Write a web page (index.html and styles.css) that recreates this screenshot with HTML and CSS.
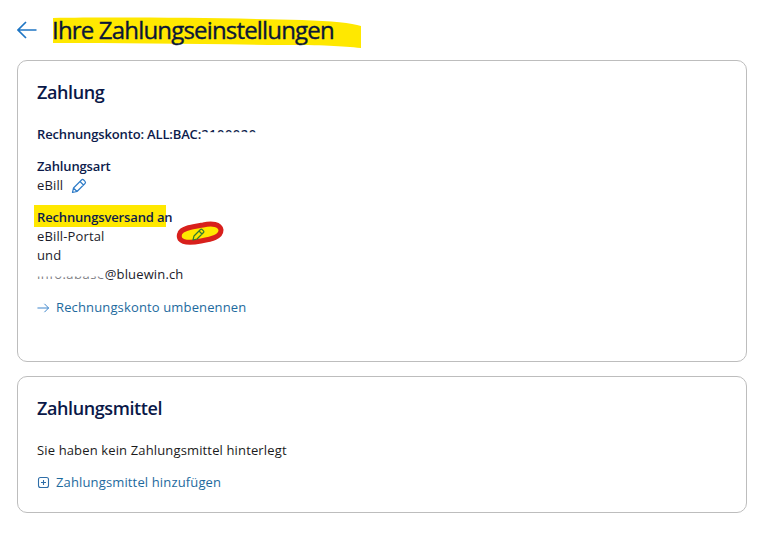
FILE: index.html
```html
<!DOCTYPE html>
<html lang="de">
<head>
<meta charset="utf-8">
<title>Ihre Zahlungseinstellungen</title>
<link rel="stylesheet" href="styles.css">
</head>
<body>
<main class="page">
  <header class="head">
    <svg class="back" viewBox="0 0 20 18" width="20" height="18"><path d="M19.500 9H1M9 1 1 9l8 8" fill="none" stroke="#1f76c4" stroke-width="1.700"/></svg>
    <h1 class="title">
      <svg class="mark-title" viewBox="0 0 310 38" width="310" height="38"><path d="M1 6C70 5 180 6 250 8 280 9 300 11 309 14L309 36C290 34 270 33 230 33 150 32 70 31 1 31Z" fill="#ffe800"/></svg>
      <span class="title-text">Ihre Zahlungseinstellungen</span>
    </h1>
  </header>
  <section class="card card-pay">
    <h2 class="card-title">Zahlung</h2>
    <p class="strong acct">Rechnungskonto: ALL:BAC:<span class="redact-acct">2100020</span></p>
    <div class="group">
      <div class="strong">Zahlungsart</div>
      <div class="row">eBill
        <svg class="pen" viewBox="0 0 16 16" width="16" height="16"><path d="M1.500 14.500l1-4.500L10.500 2a1.600 1.600 0 0 1 2.200 0l1.300 1.300a1.600 1.600 0 0 1 0 2.200L6 13.500zM9 3.500 12.500 7M2.500 10 6 13.500" fill="none" stroke="#2f7cc8" stroke-width="1.200" stroke-linejoin="round"/></svg>
      </div>
    </div>
    <div class="group group-send">
      <div class="strong send-label"><span class="mark-send"></span><span class="on-mark">Rechnungsversand an</span></div>
      <div>eBill-Portal</div>
      <div>und</div>
      <div><span class="redact-mail">info.abase</span>@bluewin.ch</div>
      <div class="scribble">
        <svg viewBox="0 0 50 28" width="50" height="28">
          <path d="M5 14C7 9 17 8 28 6 37 4 45 5 46 11 46 18 37 20 26 22 16 24 8 24 5 20 4 18 4 16 5 14Z" fill="#ffe800" stroke="#d8201c" stroke-width="5" stroke-linejoin="round"/>
          <path d="M18 21l1-4 6.500-6.500a1.100 1.100 0 0 1 1.600 0l1.400 1.400a1.100 1.100 0 0 1 0 1.600L22 20zM24 12l3 3" fill="none" stroke="#2f7a32" stroke-width="1.200" stroke-linejoin="round"/>
        </svg>
      </div>
    </div>
    <a class="link" href="#"><svg viewBox="0 0 14 12" width="13" height="12"><path d="M.5 6h12M8 1.500 12.500 6 8 10.500" fill="none" stroke="#2f7cc8" stroke-width="1"/></svg>Rechnungskonto umbenennen</a>
  </section>
  <section class="card card-means">
    <h2 class="card-title">Zahlungsmittel</h2>
    <p class="plain">Sie haben kein Zahlungsmittel hinterlegt</p>
    <a class="link" href="#"><svg viewBox="0 0 13 13" width="13" height="13"><rect x="1.500" y="1.500" width="10" height="10" rx="2" fill="none" stroke="#2f6ea8" stroke-width="1.100"/><path d="M6.500 4v5M4 6.500h5" stroke="#2f6ea8" stroke-width="1.100"/></svg>Zahlungsmittel hinzufügen</a>
  </section>
</main>
</body>
</html>
```
FILE: styles.css
```css
* { box-sizing: border-box; }
body {
  margin: 0;
  background: #fff;
  color: #1b1b2b;
  font: 13px/19px "Open Sans", "Noto Sans", sans-serif;
  letter-spacing: .14px;
}
.page { padding: 12px 12px 0 17px; }
.head { display: flex; align-items: center; gap: 15px; height: 36px; margin-bottom: 12px; }
.back { flex: none; }
.title { position: relative; margin: 0; font-size: 24px; line-height: 36px; font-weight: 400; color: #0a1638; letter-spacing: -.82px; -webkit-text-stroke: .35px #0a1638; }
.title-text { position: relative; }
.mark-title { position: absolute; left: 0; top: 0; }
.card { background: #fff; border: 1px solid #bdbdbd; border-radius: 10px; padding: 18px 19px 0; }
.card-pay { height: 302px; margin-bottom: 14px; }
.card-means { height: 137px; }
.card-title { margin: 0; font-size: 18px; line-height: 26px; font-weight: 600; color: #0a1848; letter-spacing: -.4px; }
.strong { font-weight: 600; color: #0d1b4b; letter-spacing: -.15px; }
.acct { margin: 20px 0 13px; }
.redact-acct { letter-spacing: .5px; clip-path: inset(0 0 62% 0); display: inline-block; }
.group { margin-bottom: 13px; }
.group-send { position: relative; margin-bottom: 14px; }
.row { display: flex; align-items: center; gap: 8px; }
.send-label { position: relative; }
.on-mark { position: relative; }
.mark-send { position: absolute; left: -3px; top: -3px; width: 132px; height: 22px; background: #ffe800; }
.redact-mail { display: inline-block; clip-path: inset(60% 0 0 0); opacity: .6; letter-spacing: .5px; }
.scribble { position: absolute; left: 138px; top: 11px; height: 28px; }
.link { display: flex; align-items: center; gap: 6px; color: #1d6a9e; text-decoration: none; letter-spacing: .14px; }
.plain { margin: 20px 0 13px; color: #1b1b1b; }
```
